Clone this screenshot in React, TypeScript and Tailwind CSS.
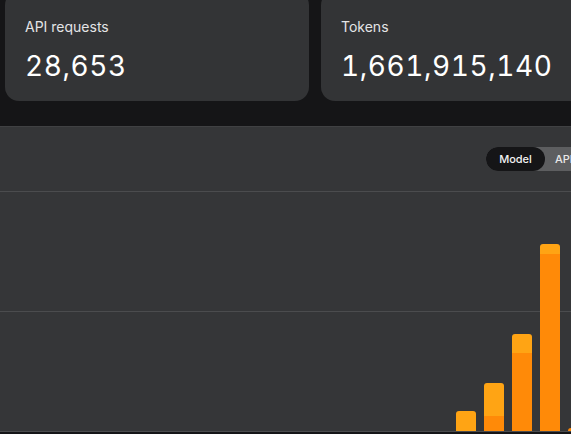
const STATS = [
  { label: "API requests", value: "28,653" },
  { label: "Tokens", value: "1,661,915,140" },
];

// daily usage, split into base (darker) and cached (lighter) portions, in px
const BARS: { base: number; extra: number }[] = [
  ...Array.from({ length: 16 }, () => ({ base: 0, extra: 0 })),
  { base: 0, extra: 20 },
  { base: 15, extra: 33 },
  { base: 78, extra: 19 },
  { base: 177, extra: 10 },
  { base: 3, extra: 0 },
  { base: 60, extra: 12 },
];

function StatCard({ label, value }: { label: string; value: string }) {
  return (
    <div className="w-[304px] flex-none rounded-[14px] bg-[#333436] px-5 pt-[26px] pb-[17px]">
      <p className="text-sm leading-5 text-[#e4e4e6]">{label}</p>
      <p className="mt-[11px] text-[28px] leading-9 tracking-[0.02em] text-white tabular-nums">
        {value}
      </p>
    </div>
  );
}

function GroupToggle() {
  return (
    <div className="flex h-6 w-[119px] items-center rounded-full bg-[#5d5e60] text-[11px]">
      <span className="flex h-6 w-[59px] flex-none items-center justify-center rounded-full bg-[#151517] font-medium text-[#f2f2f2]">
        Model
      </span>
      <span className="pl-2.5 font-medium whitespace-nowrap text-[#e8e8e8]">
        API key
      </span>
    </div>
  );
}

function UsageChart() {
  return (
    <div className="relative mt-5 h-[241px]">
      <div className="absolute inset-x-0 top-0 h-px bg-[#4b4c4e]" />
      <div className="absolute inset-x-0 top-[120px] h-px bg-[#4b4c4e]" />
      <div className="absolute inset-x-0 bottom-0 h-px bg-[#4b4c4e]" />
      <div className="relative flex h-[240px] items-end gap-2 pl-2">
        {BARS.map((bar, i) => (
          <div key={i} className="flex w-5 flex-none flex-col">
            {bar.extra > 0 && (
              <div
                className="rounded-t-[3px] bg-[#ffa414]"
                style={{ height: bar.extra }}
              />
            )}
            {bar.base > 0 && (
              <div
                className={
                  bar.extra > 0 ? "bg-[#ff8a08]" : "rounded-t-[3px] bg-[#ff8a08]"
                }
                style={{ height: bar.base }}
              />
            )}
          </div>
        ))}
      </div>
    </div>
  );
}

export default function App() {
  return (
    <div
      className="h-[434px] w-[571px] overflow-hidden bg-[#151517]"
      style={{ fontFamily: "Inter, 'Noto Sans', sans-serif" }}
    >
      <div className="-mt-[9px] flex gap-3 pl-[5px]">
        {STATS.map((s) => (
          <StatCard key={s.label} label={s.label} value={s.value} />
        ))}
      </div>

      <section className="mt-[25px] border-t border-[#404143] bg-[#353638]">
        <div className="flex justify-end pt-5">
          <div className="-mr-[34px] flex-none">
            <GroupToggle />
          </div>
        </div>
        <UsageChart />
      </section>
    </div>
  );
}
